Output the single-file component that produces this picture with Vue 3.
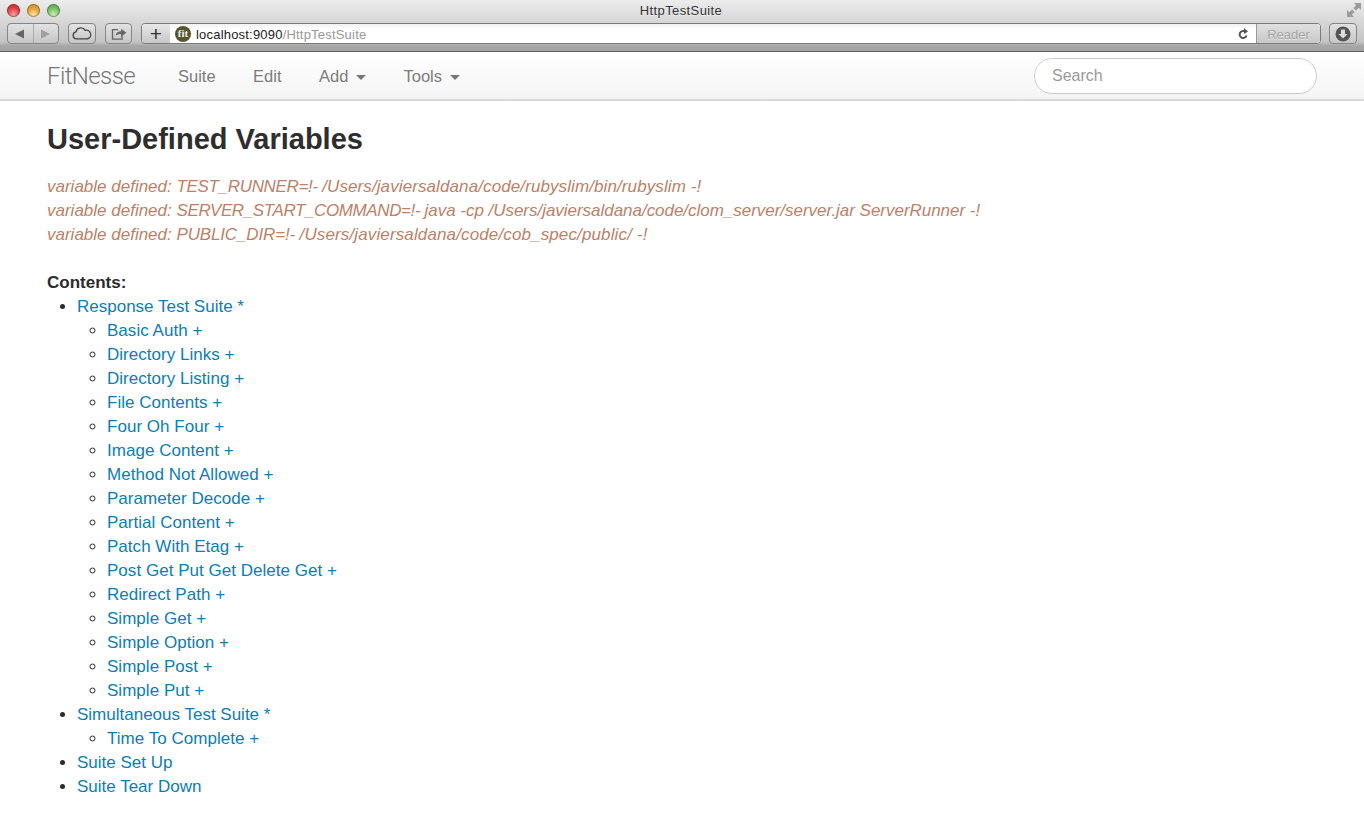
<script setup>
const vars = [
  { name: 'TEST_RUNNER=!- ', rest: '/Users/javiersaldana/code/rubyslim/bin/rubyslim -!', ns: -0.33, rs: 0.1 },
  { name: 'SERVER_START_COMMAND=!- ', rest: 'java -cp /Users/javiersaldana/code/clom_server/server.jar ServerRunner -!', ns: -0.39, rs: -0.03 },
  { name: 'PUBLIC_DIR=!- ', rest: '/Users/javiersaldana/code/cob_spec/public/ -!', ns: -0.15, rs: 0.13 },
]
const sub = ['Basic Auth','Directory Links','Directory Listing','File Contents','Four Oh Four','Image Content','Method Not Allowed','Parameter Decode','Partial Content','Patch With Etag','Post Get Put Get Delete Get','Redirect Path','Simple Get','Simple Option','Simple Post','Simple Put']
</script>

<template>
  <div class="page">
    <header class="chrome">
      <div class="titlebar">
        <div class="lights">
          <span class="light red"></span><span class="light yellow"></span><span class="light green"></span>
        </div>
        <div class="wintitle">HttpTestSuite</div>
        <svg class="expand" width="16" height="16" viewBox="0 0 16 16"><path d="M8 1h7v7l-2.200-2.200-2.800 2.800-2.600-2.600 2.800-2.800zM1 15V8l2.200 2.200 2.800-2.800 2.600 2.600-2.800 2.800L8 15z" fill="#9c9c9c"/></svg>
      </div>
      <div class="toolbar">
        <div class="btn backfwd">
          <span class="seg"><svg width="10" height="10" viewBox="0 0 10 10"><path d="M0 5l9-4.500v9z" fill="#666"/></svg></span>
          <span class="seg"><svg width="10" height="10" viewBox="0 0 10 10"><path d="M9 5L0 .5v9z" fill="#a0a0a0"/></svg></span>
        </div>
        <div class="btn icon">
          <svg width="20" height="13" viewBox="0 0 22 14"><path d="M5 13a4 4 0 0 1-.6-7.900A5.500 5.500 0 0 1 14.500 3.600 4.700 4.700 0 0 1 17 13z" fill="none" stroke="#444" stroke-width="1.400"/></svg>
        </div>
        <div class="btn icon share">
          <svg width="16" height="13" viewBox="0 0 18 15"><path d="M8 3H1.500v11h11V9" fill="none" stroke="#666" stroke-width="1.600"/><path d="M5 10c.5-3.500 3-5 6.500-5V2l6 4.500-6 4.500V8c-3 0-5 .5-6.500 2z" fill="#666"/></svg>
        </div>
        <div class="address">
          <span class="plus">+</span>
          <div class="urlfield">
            <span class="favicon">fit</span>
            <span class="url">localhost:9090<span class="path">/HttpTestSuite</span></span>
            <svg class="reload" width="11" height="12" viewBox="0 0 11 12"><path d="M8.500 7.500a3.500 3.500 0 1 1-1.500-4" fill="none" stroke="#555" stroke-width="2"/><path d="M6 0l4 3.500L6 6z" fill="#555"/></svg>
            <span class="reader">Reader</span>
          </div>
        </div>
        <div class="btn download">
          <svg width="16" height="16" viewBox="0 0 16 16"><circle cx="8" cy="8" r="7.500" fill="#555"/><path d="M6 3.500h4V8h2.500L8 12.500 3.500 8H6z" fill="#ddd"/></svg>
        </div>
      </div>
    </header>

    <nav class="navbar">
      <a class="brand">FitNesse</a>
      <ul class="menu">
        <li>Suite</li>
        <li>Edit</li>
        <li>Add <i class="caret"></i></li>
        <li>Tools <i class="caret"></i></li>
      </ul>
      <input class="search" placeholder="Search" />
    </nav>

    <main class="content">
      <h1>User-Defined Variables</h1>
      <div class="vars">
        <div v-for="v in vars" :key="v.name" class="var">variable defined: <span :style="{ letterSpacing: v.ns + 'px' }">{{ v.name }}</span><span :style="{ letterSpacing: v.rs + 'px' }">{{ v.rest }}</span></div>
      </div>
      <div class="contents">
        <b>Contents:</b>
        <ul class="l1">
          <li><a>Response Test Suite *</a>
            <ul class="l2"><li v-for="s in sub" :key="s"><a>{{ s }} +</a></li></ul>
          </li>
          <li><a>Simultaneous Test Suite *</a>
            <ul class="l2"><li><a>Time To Complete +</a></li></ul>
          </li>
          <li><a>Suite Set Up</a></li>
          <li><a>Suite Tear Down</a></li>
        </ul>
      </div>
    </main>
  </div>
</template>

<style>
html, body { margin: 0; background: #fff; }
</style>

<style scoped>
.page { width: 1364px; height: 825px; overflow: hidden; font-family: "Liberation Sans", Arial, sans-serif; background: #fff; }
.chrome { height: 52px; box-sizing: border-box; background: linear-gradient(#ececec, #c4c4c4 82%, #a6a6a6 90%, #a4a4a4); border-bottom: 1px solid #5f5f5f; }
.titlebar { height: 22px; display: flex; align-items: center; position: relative; }
.lights { display: flex; gap: 7px; margin: -2px 0 0 7px; }
.light { width: 13px; height: 13px; border-radius: 50%; box-shadow: inset 0 0 0 1px rgba(0,0,0,.3); }
.red { background: radial-gradient(circle at 50% 80%, #f8a0a0, #d8343a 60%); }
.yellow { background: radial-gradient(circle at 50% 80%, #fbe0a0, #dc9a30 60%); }
.green { background: radial-gradient(circle at 50% 80%, #c8efb0, #6cb55a 60%); }
.wintitle { position: absolute; left: 0; right: 2px; text-align: center; font-size: 13px; letter-spacing: .4px; color: #333; top: 3px; text-shadow: 0 1px 0 rgba(255,255,255,.5); }
.expand { position: absolute; right: 2px; top: 2px; }
.toolbar { height: 29px; display: flex; align-items: flex-start; padding-top: 1px; box-sizing: border-box; }
.btn { height: 21px; box-sizing: border-box; border: 1px solid #858585; border-radius: 4px; background: linear-gradient(#e2e2e2, #c6c6c6); display: flex; align-items: center; justify-content: center; }
.backfwd { width: 52px; margin-left: 7px; }
.seg { flex: 1; display: flex; align-items: center; justify-content: center; height: 100%; }
.seg + .seg { border-left: 1px solid #aaa; }
.icon { width: 28px; margin-left: 9px; }
.share { margin-left: 9px; width: 27px; }
.address { display: flex; flex: 1; height: 21px; margin-left: 9px; box-sizing: border-box; border: 1px solid #7a7a7a; border-radius: 4px; overflow: hidden; }
.plus { width: 28px; background: linear-gradient(#e8e8e8, #c8c8c8); font-size: 21px; line-height: 19px; text-align: center; color: #333; }
.urlfield { flex: 1; display: flex; align-items: center; background: linear-gradient(#f2f2f2, #fff 30%); }
.favicon { width: 16px; height: 16px; border-radius: 50%; background: #55562f; color: #eee; font: bold 11px/15px "Liberation Serif", serif; text-align: center; margin-left: 5px; }
.url { margin-left: 5px; padding-top: 2px; font-size: 13px; letter-spacing: .2px; color: #222; flex: 1; }
.path { color: #999; }
.reload { margin-right: 7px; }
.reader { width: 64px; height: 100%; box-sizing: border-box; border-left: 1px solid #999; background: linear-gradient(#e0e0e0, #c8c8c8); color: #a5a5a5; font-size: 13px; line-height: 21px; text-align: center; text-shadow: 0 1px 0 rgba(255,255,255,.5); }
.download { width: 28px; margin: 0 7px 0 8px; }
.navbar { height: 49px; box-sizing: border-box; border-bottom: 2px solid #d8d8d8; background: linear-gradient(#fff, #f4f4f4); display: flex; align-items: center; padding-left: 47px; }
.brand { font-family: Roboto, "Liberation Sans", sans-serif; font-size: 24px; letter-spacing: -.6px; font-weight: 300; color: #777; width: 131px; }
.menu { list-style: none; margin: 0; padding: 1px 0 0; display: flex; gap: 37.500px; flex: 1; font-size: 16.500px; color: #7c7c7c; }
.caret { display: inline-block; width: 0; height: 0; border: 5px solid transparent; border-top-color: #777; border-bottom: 0; vertical-align: middle; margin-left: 3px; }
.search { width: 283px; height: 36px; box-sizing: border-box; margin: 0 47px 0 0; border: 1px solid #ccc; border-radius: 18px; padding: 0 17px; font: 16px "Liberation Sans", Arial, sans-serif; background: #fff; outline: none; }
.search::placeholder { color: #999; opacity: 1; }
.content { padding: 0 47px; font-size: 17px; line-height: 24px; color: #2b2b2b; }
h1 { margin: 0; padding-top: 20px; font-size: 29px; line-height: 36px; height: 47px; color: #2e2e2e; font-weight: bold; }
.vars { padding-top: 7px; }
.var { color: #bc8167; font-style: italic; }
.contents { margin-top: 24px; }
.l1 { margin: 0; padding-left: 30px; list-style: disc; }
.l2 { margin: 0; padding-left: 30px; list-style: circle; letter-spacing: .03px; }
a { color: #0c7db5; }
</style>
